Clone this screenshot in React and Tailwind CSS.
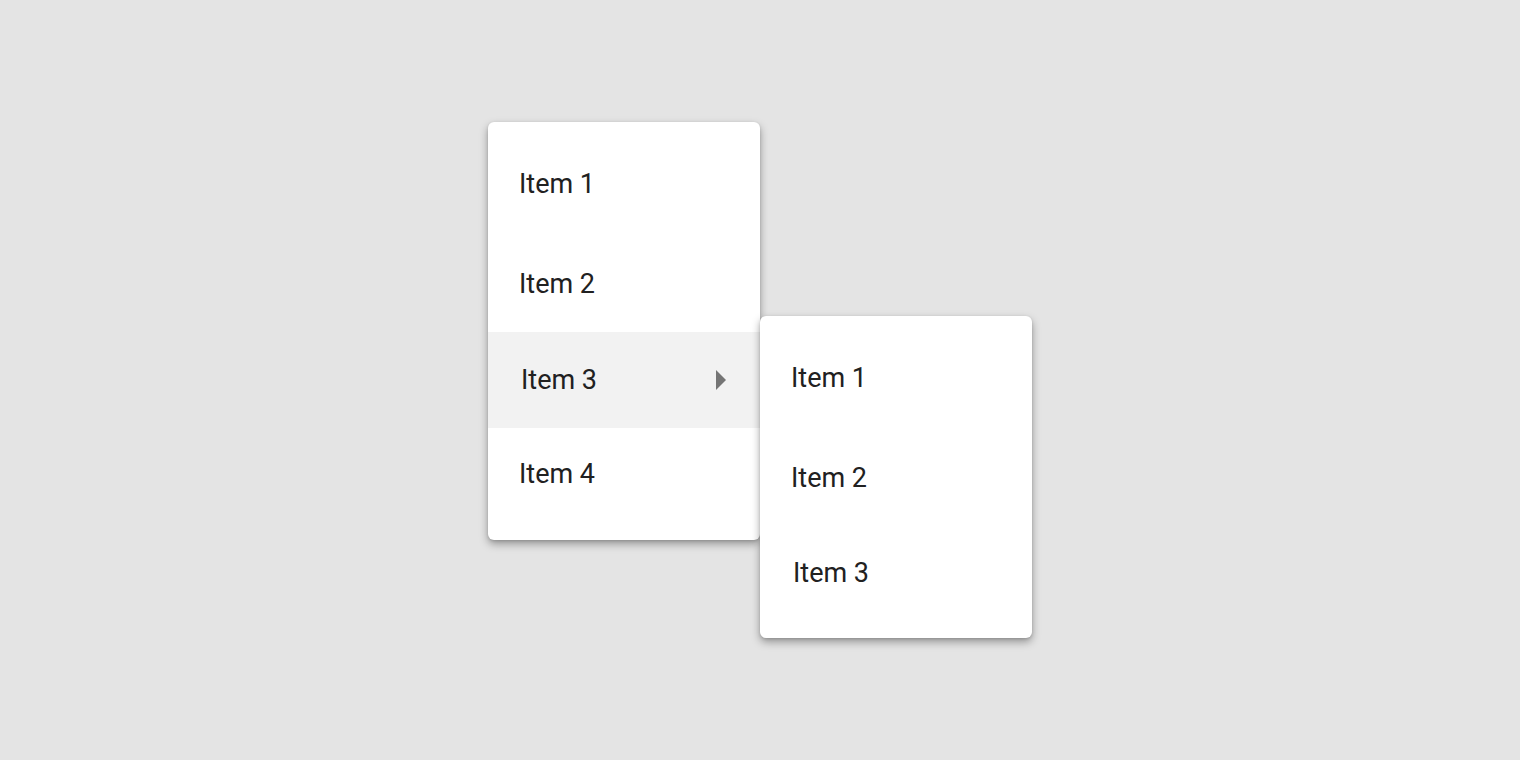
import React from 'react'

const Arrow = () => (
  <svg width="10" height="20" viewBox="0 0 10 20" className="fill-[#757575]">
    <path d="M0 0 L10 10 L0 20 Z" />
  </svg>
)

const MenuItem = ({ label, h = 'h-[96px]', pb = '', shift = false, active = false, arrow = false }) => (
  <div className={`flex items-center justify-between ${h} ${pb} ${shift ? 'pl-[33px]' : 'pl-[31px]'} pr-[34px] ${active ? 'bg-[#f2f2f2]' : ''}`}>
    <span className="text-[27px] text-[#212121] leading-none">{label}</span>
    {arrow && <Arrow />}
  </div>
)

export default function App() {
  return (
    <div className="w-[1520px] h-[760px] bg-[#e4e4e4] flex font-['Roboto',sans-serif]">
      <div className="flex items-start pl-[488px] pt-[122px]">
        {/* main menu */}
        <div className="w-[272px] bg-white rounded-[6px] pt-[14px] pb-[16px] overflow-hidden shadow-[0_4px_8px_rgba(0,0,0,0.35),0_1px_3px_rgba(0,0,0,0.12)]">
          <MenuItem label="Item 1" h="h-[100px]" pb="pb-[4px]" />
          <MenuItem label="Item 2" />
          <MenuItem label="Item 3" shift active arrow />
          <MenuItem label="Item 4" pb="pb-[4px]" />
        </div>

        {/* submenu */}
        <div className="relative z-10 mt-[194px] w-[272px] bg-white rounded-[6px] pt-[14px] pb-[16px] shadow-[0_4px_8px_rgba(0,0,0,0.35),0_1px_3px_rgba(0,0,0,0.12)]">
          <MenuItem label="Item 1" h="h-[100px]" pb="pb-[4px]" />
          <MenuItem label="Item 2" />
          <MenuItem label="Item 3" pb="pb-[2px]" shift />
        </div>
      </div>
    </div>
  )
}
